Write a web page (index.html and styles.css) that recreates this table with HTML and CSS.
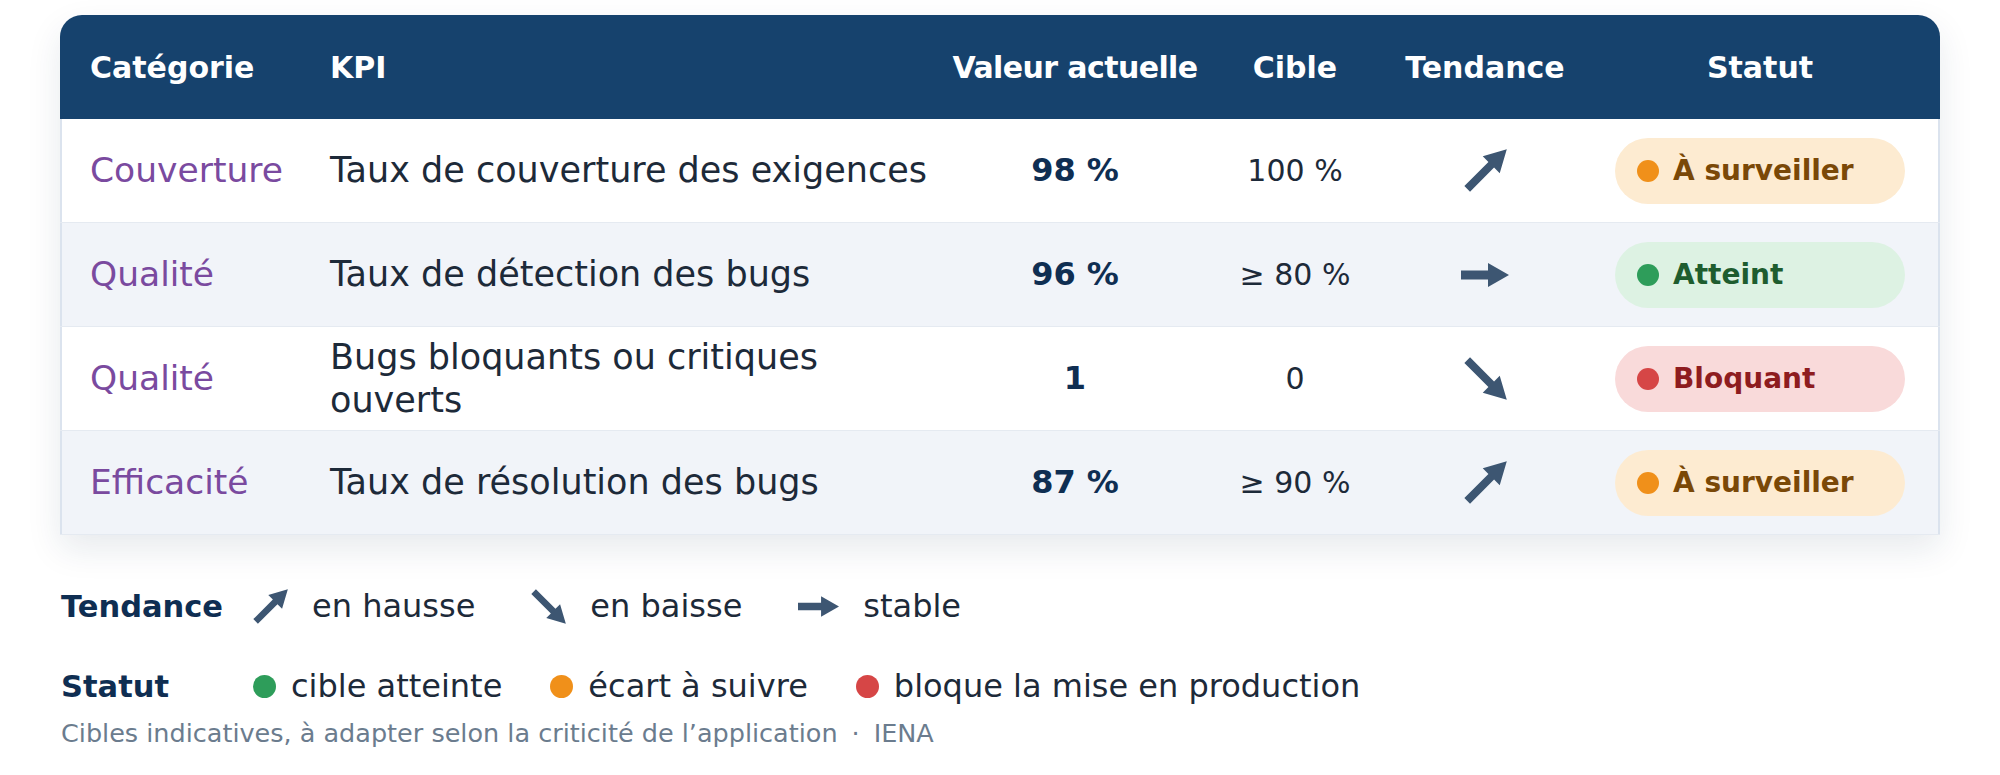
FILE: index.html
```html
<!DOCTYPE html>
<html lang="fr">
<head>
<meta charset="utf-8">
<title>KPI Qualité</title>
<link rel="stylesheet" href="styles.css">
</head>
<body>
<div class="page">
  <div class="card">
    <div class="row head">
      <div class="c first">Catégorie</div>
      <div class="c kpi">KPI</div>
      <div class="c ctr tight">Valeur actuelle</div>
      <div class="c ctr">Cible</div>
      <div class="c ctr">Tendance</div>
      <div class="c ctr">Statut</div>
    </div>

    <div class="row body">
      <div class="c first cat">Couverture</div>
      <div class="c kpi">Taux de couverture des exigences</div>
      <div class="c ctr val">98 %</div>
      <div class="c ctr tgt">100 %</div>
      <div class="c ctr trend"><svg class="ar-diag" viewBox="-23 -20 43 43"><path d="M-28 -4H6V-12L28 0L6 12V4H-28Z" transform="rotate(-45)"/></svg></div>
      <div class="c ctr"><span class="pill warn"><span class="dot"></span>À surveiller</span></div>
    </div>

    <div class="row body alt">
      <div class="c first cat">Qualité</div>
      <div class="c kpi">Taux de détection des bugs</div>
      <div class="c ctr val">96 %</div>
      <div class="c ctr tgt">≥ 80 %</div>
      <div class="c ctr trend"><svg class="ar-right" viewBox="0 0 48 24"><path d="M0 7.5H27V0L48 12L27 24V16.5H0Z"/></svg></div>
      <div class="c ctr"><span class="pill ok"><span class="dot"></span>Atteint</span></div>
    </div>

    <div class="row body">
      <div class="c first cat">Qualité</div>
      <div class="c kpi">Bugs bloquants ou critiques ouverts</div>
      <div class="c ctr val">1</div>
      <div class="c ctr tgt">0</div>
      <div class="c ctr trend"><svg class="ar-diag" viewBox="-23 -23 43 43"><path d="M-28 -4H6V-12L28 0L6 12V4H-28Z" transform="rotate(45)"/></svg></div>
      <div class="c ctr"><span class="pill bad"><span class="dot"></span>Bloquant</span></div>
    </div>

    <div class="row body alt">
      <div class="c first cat">Efficacité</div>
      <div class="c kpi">Taux de résolution des bugs</div>
      <div class="c ctr val">87 %</div>
      <div class="c ctr tgt">≥ 90 %</div>
      <div class="c ctr trend"><svg class="ar-diag" viewBox="-23 -20 43 43"><path d="M-28 -4H6V-12L28 0L6 12V4H-28Z" transform="rotate(-45)"/></svg></div>
      <div class="c ctr"><span class="pill warn"><span class="dot"></span>À surveiller</span></div>
    </div>
  </div>

  <div class="legend">
    <div class="lrow">
      <span class="llabel">Tendance</span>
      <span class="litem"><svg class="lar-diag" viewBox="-23 -20 43 43"><path d="M-28 -4H6V-12L28 0L6 12V4H-28Z" transform="rotate(-45)"/></svg>en hausse</span>
      <span class="litem"><svg class="lar-diag" viewBox="-23 -23 43 43"><path d="M-28 -4H6V-12L28 0L6 12V4H-28Z" transform="rotate(45)"/></svg>en baisse</span>
      <span class="litem"><svg class="lar-right" viewBox="0 0 48 24"><path d="M0 7.5H27V0L48 12L27 24V16.5H0Z"/></svg>stable</span>
    </div>
    <div class="lrow second">
      <span class="llabel">Statut</span>
      <span class="litem dotitem"><span class="ldot green"></span>cible atteinte</span>
      <span class="litem dotitem"><span class="ldot orange"></span>écart à suivre</span>
      <span class="litem dotitem"><span class="ldot red"></span>bloque la mise en production</span>
    </div>
    <p class="note">Cibles indicatives, à adapter selon la criticité de l’application<span class="sep">·</span>IENA</p>
  </div>
</div>
</body>
</html>
```

FILE: styles.css
```css
* { box-sizing: border-box; }

html, body {
  margin: 0;
  background: #ffffff;
}

body {
  font-family: "DejaVu Sans", "Liberation Sans", sans-serif;
  color: #1d2a39;
}

.page {
  padding: 15px 60px 0;
}

.card {
  width: 1880px;
  border-radius: 22px 22px 0 0;
  overflow: hidden;
  background: #ffffff;
  box-shadow: 0 14px 34px rgba(20, 45, 80, 0.10);
}

.row {
  display: grid;
  grid-template-columns: 240px 650px 250px 190px 190px 360px;
  align-items: center;
  height: 104px;
}

.row.head {
  background: #16426d;
  color: #ffffff;
  font-weight: 700;
  font-size: 30px;
  white-space: nowrap;
}

.row.head .tight {
  letter-spacing: -0.6px;
}

.row.body {
  background: #ffffff;
  box-shadow: inset 2px 0 0 #dbe3ee, inset -2px 0 0 #dbe3ee;
  border-bottom: 1px solid #e5eaf1;
}

.row.body.alt {
  background: #f1f4f9;
}

.c {
  min-width: 0;
}

.first {
  padding-left: 30px;
}

.kpi {
  padding-left: 30px;
  padding-right: 8px;
}

.ctr {
  display: flex;
  justify-content: center;
  align-items: center;
  text-align: center;
}

.row.body .c {
  font-size: 35px;
  line-height: 43px;
}

.row.body .cat {
  font-size: 34.5px;
  color: #7a4a9f;
}

.row.body .kpi {
  color: #1d2a39;
}

.row.body .val {
  font-weight: 700;
  font-size: 32px;
  color: #0f2e52;
}

.row.body .tgt {
  font-size: 30px;
  color: #1d2a39;
}

.trend {
  color: #3d5672;
}

.ar-diag {
  width: 43px;
  height: 43px;
  fill: currentColor;
}

.ar-right {
  width: 48px;
  height: 24px;
  fill: currentColor;
}

.pill {
  display: flex;
  align-items: center;
  gap: 14px;
  width: 290px;
  height: 66px;
  padding-left: 22px;
  border-radius: 33px;
  font-size: 28px;
  font-weight: 700;
  line-height: 1;
}

.pill .dot {
  width: 22px;
  height: 22px;
  border-radius: 50%;
  flex: none;
}

.pill.warn { background: #fdebd1; color: #7a4807; }
.pill.warn .dot { background: #f0901a; }
.pill.ok { background: #ddf2e3; color: #1e5d2f; }
.pill.ok .dot { background: #2e9d5a; }
.pill.bad { background: #f9dada; color: #8e1c1f; }
.pill.bad .dot { background: #d64646; }

.legend {
  margin-top: 49px;
  padding-left: 1px;
}

.lrow {
  display: flex;
  align-items: center;
  height: 44px;
  font-size: 32px;
  color: #1d2a39;
}

.lrow.second {
  margin-top: 36px;
}

.llabel {
  width: 162px;
  margin-right: 30px;
  font-size: 30.5px;
  font-weight: 700;
  color: #0f2e52;
  flex: none;
}

.litem {
  display: flex;
  align-items: center;
  gap: 24px;
  margin-right: 56px;
  color: #1d2a39;
}

.litem svg {
  fill: #3d5672;
  flex: none;
}

.lar-diag {
  width: 35px;
  height: 35px;
}

.lar-right {
  width: 41px;
  height: 21px;
}

.dotitem {
  gap: 15px;
  margin-right: 48px;
}

.ldot {
  width: 23px;
  height: 23px;
  border-radius: 50%;
  flex: none;
}

.ldot.green { background: #2e9d5a; }
.ldot.orange { background: #f0901a; }
.ldot.red { background: #d64646; }

.note {
  margin: 10px 0 0;
  font-size: 25.5px;
  line-height: 30px;
  color: #6b7c8e;
}

.note .sep {
  margin: 0 14px;
}
```
